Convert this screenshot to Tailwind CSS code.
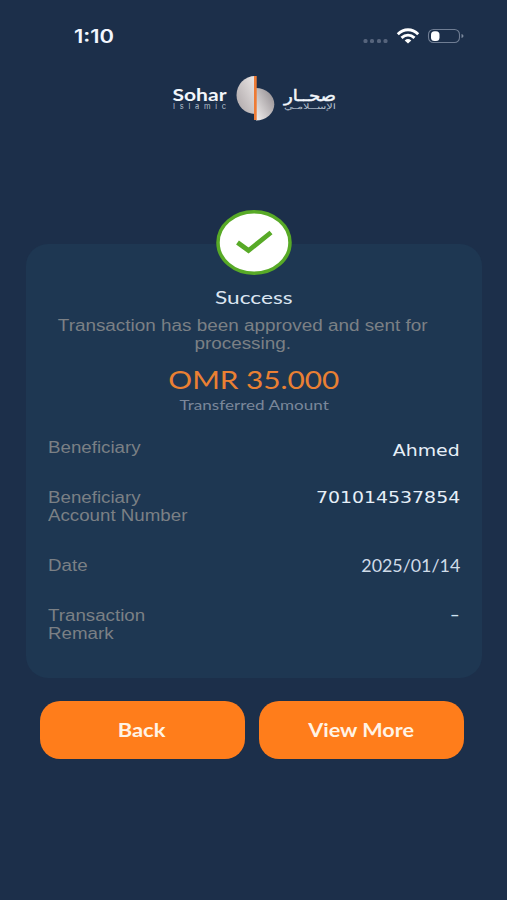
<!DOCTYPE html>
<html lang="en">
<head>
<meta charset="utf-8">
<title>Transfer Success</title>
<script src="https://cdn.jsdelivr.net/npm/@tailwindcss/browser@4"></script>
</head>
<body class="bg-[#1c2f4a]">
<main class="w-[507px] h-[900px] overflow-hidden bg-[#1c2f4a] flex flex-col font-['Liberation_Sans',sans-serif]">
  <header class="h-[72px] shrink-0 flex justify-between items-start pt-[24px] pl-[74px] pr-[43px]">
    <span class="inline-block origin-left scale-x-[1.22] font-['Inter',sans-serif] font-semibold text-[18px] leading-[26px] text-[#f3f7ff]">1:10</span>
    <svg width="102" height="24" viewBox="0 0 102 24" fill="none">
      <g fill="#56647c"><rect x="1.500" y="15" width="4" height="4" rx="1.500"/><rect x="8" y="15" width="4" height="4" rx="1.500"/><rect x="15" y="15" width="4" height="4" rx="1.500"/><rect x="21.500" y="15" width="4" height="4" rx="1.500"/></g>
      <g stroke="#fff" stroke-width="2.900"><path d="M35.800 10.200C41.800 4.300 50.200 4.300 56.200 10.200"/><path d="M39.500 13.800C43.500 10.200 48.500 10.200 52.500 13.800"/></g>
      <path d="M42.700 16.500Q46 13.700 49.300 16.500L46 19.600Z" fill="#fff"/>
      <rect x="66.500" y="5.500" width="31" height="13" rx="5" stroke="#6f7d93" stroke-width="1.100"/>
      <rect x="69" y="7.300" width="8.500" height="9.700" rx="3.500" fill="#fff"/>
      <path d="M99.500 10v4q2-.6 2-2t-2-2" fill="#7b889c"/>
    </svg>
  </header>

  <div class="h-[172px] shrink-0 pl-[168px]">
    <svg class="overflow-visible" width="172" height="54" viewBox="168 72 172 54" role="img" aria-label="Sohar Islamic">
      <defs>
        <linearGradient id="a" x1="0" y1="1" x2="1" y2="0"><stop offset="0" stop-color="#aaa3a5"/><stop offset="1" stop-color="#ece8e7"/></linearGradient>
        <linearGradient id="b" x1="1" y1="0" x2="0" y2="1"><stop offset="0" stop-color="#8b8589"/><stop offset="1" stop-color="#f3f0ef"/></linearGradient>
      </defs>
      <text x="172.500" y="101" font-family="Lato, sans-serif" font-weight="700" font-size="17.500" fill="#f2f6fb" textLength="54" lengthAdjust="spacingAndGlyphs">Sohar</text>
      <text x="173" y="109" font-family="Inter, sans-serif" font-size="7.500" fill="#b7c1cf" textLength="53">Islamic</text>
      <path d="M255 76A18.500 19 0 0 0 255 114Z" fill="url(#a)"/>
      <path d="M256 88A18.300 16.200 0 0 1 256 120.400Z" fill="url(#b)"/>
      <rect x="254" y="76" width="2.700" height="44" fill="#ee7b35"/>
      <text x="284" y="101" direction="rtl" text-anchor="end" font-family="'DejaVu Sans', sans-serif" font-size="16" fill="#f2f6fb" stroke="#f2f6fb" stroke-width=".5" textLength="52" lengthAdjust="spacingAndGlyphs">صحــار</text>
      <text x="284" y="109" direction="rtl" text-anchor="end" font-family="'DejaVu Sans', sans-serif" font-size="7.500" fill="#b7c1cf" textLength="52" lengthAdjust="spacingAndGlyphs">الإســلامـي</text>
    </svg>
  </div>

  <section class="relative shrink-0 ml-[26px] w-[456px] h-[434px] rounded-[22px] bg-[#1e3752] px-[22px] pt-[42px] flex flex-col">
    <svg class="absolute left-[189px] -top-[35px]" width="78" height="67" viewBox="0 0 78 67">
      <ellipse cx="39" cy="33.500" rx="36" ry="30.800" fill="#fff" stroke="#58aa27" stroke-width="3.500"/>
      <path d="M22.500 33.500L33.500 41.500L56 23.500" fill="none" stroke="#58aa27" stroke-width="4.800"/>
    </svg>
    <h1 class="h-[22px] text-center"><span class="inline-block scale-x-[1.26] font-['Lato',sans-serif] text-[18px] leading-[22px] text-[#dbe5f1]">Success</span></h1>
    <p class="mt-[9px] h-[36px] -ml-[22px] text-center"><span class="inline-block whitespace-nowrap scale-x-[1.18] text-[16px] leading-[18px] text-[#7b8085]">Transaction has been approved and sent for<br>processing.</span></p>
    <p class="mt-[12px] h-[28px] text-center"><span class="inline-block scale-x-[1.19] font-['Lato',sans-serif] text-[25px] leading-[28px] text-[#ea8033]">OMR 35.000</span></p>
    <p class="h-[22px] text-center"><span class="inline-block scale-x-[1.22] font-['Lato',sans-serif] text-[14px] leading-[21px] text-[#7a879a]">Transferred Amount</span></p>

    <dl class="mt-[24px] text-[16px] leading-[18px] text-[#7b8085]">
      <div class="h-[50px] flex justify-between">
        <dt class="origin-left scale-x-[1.17]">Beneficiary</dt>
        <dd class="pt-[3px] origin-right scale-x-[1.18] font-['DejaVu_Sans',sans-serif] text-[#e6eff8]">Ahmed</dd>
      </div>
      <div class="h-[68px] flex justify-between">
        <dt class="origin-left scale-x-[1.17]">Beneficiary<br>Account Number</dt>
        <dd class="origin-right scale-x-[1.18] font-['DejaVu_Sans',sans-serif] text-[#e6eff8]">701014537854</dd>
      </div>
      <div class="h-[50px] flex justify-between">
        <dt class="origin-left scale-x-[1.17]">Date</dt>
        <dd class="origin-right scale-x-[1.05] font-['Lato',sans-serif] text-[17px] text-[#cfdbe8]">2025/01/14</dd>
      </div>
      <div class="h-[50px] flex justify-between">
        <dt class="origin-left scale-x-[1.17]">Transaction<br>Remark</dt>
        <dd class="mt-[5px] h-[18px] origin-right text-[#cfe3f2] font-['Lato',sans-serif] text-[18px] leading-[4px] scale-x-[1.500]">-</dd>
      </div>
    </dl>
  </section>

  <div class="mt-[23px] ml-[39.5px] flex gap-[14px]">
    <button class="w-[205px] h-[58px] rounded-[20px] bg-[#ff7d1b] text-[#fff3e5] font-['Lato',sans-serif] font-bold text-[18px]"><span class="inline-block pt-px scale-x-[1.22]">Back</span></button>
    <button class="w-[205px] h-[58px] rounded-[20px] bg-[#ff7d1b] text-[#fff3e5] font-['Lato',sans-serif] font-bold text-[18px]"><span class="inline-block pt-px scale-x-[1.2]">View More</span></button>
  </div>
</main>
</body>
</html>
